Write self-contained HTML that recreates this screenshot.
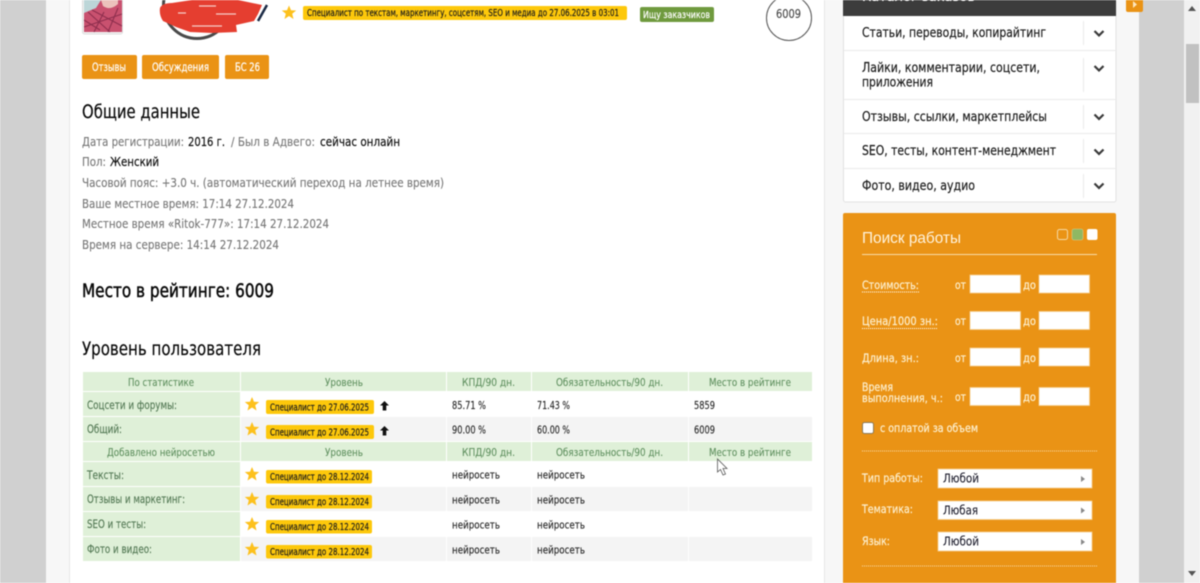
<!DOCTYPE html>
<html lang="ru"><head><meta charset="utf-8"><title>Профиль</title>
<style>
html,body{margin:0;padding:0;width:1200px;height:583px;overflow:hidden;background:#fff}
svg{display:block;filter:blur(.45px)}
text{font-family:"DejaVu Sans","Liberation Sans",sans-serif;font-size:12.5px;fill:#777;stroke:#777;stroke-width:.12px}
.d{fill:#111;stroke:#111;stroke-width:.2px}
.h{font-size:18.5px;fill:#0a0a0a;stroke:#0a0a0a;stroke-width:.2px}
.b{font-size:18.5px;fill:#0a0a0a;stroke:#0a0a0a;stroke-width:.5px}
.s{font-size:13px;fill:#1c1c1c;stroke:#1c1c1c;stroke-width:.2px}
.th{font-size:11px;fill:#5f905f;stroke:#5f905f;stroke-width:.1px}
.f{font-size:11.5px;fill:#557a56;stroke:#557a56;stroke-width:.15px}
.c{font-size:11px;fill:#2a2a2a;stroke:#2a2a2a;stroke-width:.15px}
.bt{font-size:9.500px;fill:#1c1c1c;stroke:#1c1c1c;stroke-width:.2px}
.w{font-size:11.5px;fill:#fff;stroke:#fff;stroke-width:.2px}
.y{font-size:11.5px;fill:#fdf0d0;stroke:#fdf0d0;stroke-width:.2px}
.sel{font-size:12.5px;fill:#1a1a2a;stroke:#1a1a2a;stroke-width:.1px}
</style></head><body>
<svg xmlns="http://www.w3.org/2000/svg" width="1200" height="583" viewBox="0 0 1200 583">
<defs>
<path id="st" d="M0-7 2-2.200 7.200-2 3.200 1.200 4.500 6.500 0 3.500-4.500 6.500-3.200 1.200-7.200-2-2-2.200Z" fill="#fdc11d"/>
<path id="ar" d="M0-5 4.500-.5H1.800V4.500H-1.800V-.5H-4.500Z" fill="#111"/>
<path id="ch" d="M-4.500-2.500 0 2 4.500-2.500" fill="none" stroke="#3a3a3a" stroke-width="2.200"/>
</defs>
<!-- backgrounds -->
<rect width="1200" height="583" fill="#f7f7f7"/>
<rect x="0" y="0" width="46" height="583" fill="#d0d0d0"/>
<rect x="1139" y="0" width="45" height="583" fill="#d0d0d0"/>
<rect x="1184" y="0" width="16" height="583" fill="#f1f1f1"/>
<rect x="1186" y="44" width="13" height="59" fill="#c1c1c1"/>
<path d="M1192 6l4 5h-8Z" fill="#555"/><path d="M1192 576l4-5h-8Z" fill="#555"/>
<rect x="69.500" y="-1" width="755" height="590" fill="#fff" stroke="#e6e6e6"/>
<!-- avatar -->
<rect x="82.500" y="-3" width="40" height="37" rx="2" fill="#f2f2f2" stroke="#ddd"/>
<rect x="84" y="0" width="38" height="32" fill="#bcd6d8"/>
<path d="M84 32V13L96 8 101 0H122V32Z" fill="#c9516f"/>
<path d="M101 0H118V4Q110 11 103 6Z" fill="#ecc2bc"/>
<path d="M84 20 100 30M88 12 110 32M104 12 94 32M118 8 108 32M84 27 122 14M92 10 122 26" stroke="#8f2f4e" stroke-width="1.100" fill="none"/>
<!-- scribbled name -->
<circle cx="197" cy="5" r="33.500" fill="none" stroke="#4a4a4a" stroke-width="3"/>
<path d="M258 21 267 5" stroke="#1b2a45" stroke-width="2.500"/>
<path d="M160 8Q162 3 172 3L192 0H238L262 5 258 14 254 21 236 25 237 32 212 33 190 32 176 27 163 21Q159 15 160 8Z" fill="#e53e30"/>
<path d="M199 6H216M192 26H222M178 13H186M216 14H236" stroke="#f6cfc9" stroke-width="1.200"/>
<!-- top badges -->
<use href="#st" x="289" y="12.500"/>
<rect x="303" y="6" width="324" height="14" rx="2" fill="#fdc80b"/>
<text x="307" y="16" textLength="312" lengthAdjust="spacingAndGlyphs" class="bt">Специалист по текстам, маркетингу, соцсетям, SEO и медиа до 27.06.2025 в 03:01</text>
<rect x="640" y="7" width="74" height="15" rx="2" fill="#6f9a3e"/>
<text x="643" y="18" textLength="67" lengthAdjust="spacingAndGlyphs" style="font-size:10px;fill:#fff;stroke:#fff;stroke-width:.2px">Ищу заказчиков</text>
<circle cx="789" cy="18" r="22.500" fill="#fff" stroke="#555"/>
<text x="776" y="18" textLength="25" lengthAdjust="spacingAndGlyphs" style="fill:#444;stroke:#444">6009</text>
<!-- buttons -->
<rect x="82" y="55" width="55" height="24" rx="2" fill="#ea9315"/>
<rect x="142" y="55" width="77" height="24" rx="2" fill="#ea9315"/>
<rect x="225" y="55" width="44" height="24" rx="2" fill="#ea9315"/>
<text x="92" y="71" textLength="34" lengthAdjust="spacingAndGlyphs" class="w">Отзывы</text>
<text x="152" y="71" textLength="57" lengthAdjust="spacingAndGlyphs" class="w">Обсуждения</text>
<text x="235" y="71" textLength="25" lengthAdjust="spacingAndGlyphs" class="w">БС 26</text>
<!-- general -->
<text x="82" y="118" textLength="118" lengthAdjust="spacingAndGlyphs" class="h">Общие данные</text>
<text x="82" y="146" textLength="102" lengthAdjust="spacingAndGlyphs">Дата регистрации:</text>
<text x="188" y="146" textLength="37" lengthAdjust="spacingAndGlyphs" class="d">2016 г.</text>
<text x="231" y="146" textLength="84" lengthAdjust="spacingAndGlyphs">/ Был в Адвего:</text>
<text x="320" y="146" textLength="80" lengthAdjust="spacingAndGlyphs" class="d">сейчас онлайн</text>
<text x="82" y="166" textLength="24" lengthAdjust="spacingAndGlyphs">Пол:</text>
<text x="110" y="166" textLength="49" lengthAdjust="spacingAndGlyphs" class="d">Женский</text>
<text x="82" y="187" textLength="362" lengthAdjust="spacingAndGlyphs">Часовой пояс: +3.0 ч. (автоматический переход на летнее время)</text>
<text x="82" y="208" textLength="212" lengthAdjust="spacingAndGlyphs">Ваше местное время: 17:14 27.12.2024</text>
<text x="82" y="228" textLength="247" lengthAdjust="spacingAndGlyphs">Местное время «Ritok-777»: 17:14 27.12.2024</text>
<text x="82" y="249" textLength="197" lengthAdjust="spacingAndGlyphs">Время на сервере: 14:14 27.12.2024</text>
<text x="82" y="297" textLength="192" lengthAdjust="spacingAndGlyphs" class="b">Место в рейтинге: 6009</text>
<text x="82" y="355" textLength="179" lengthAdjust="spacingAndGlyphs" class="h">Уровень пользователя</text>
<!-- table -->
<g fill="#dff0d8">
<rect x="83" y="372" width="157" height="19"/><rect x="241" y="372" width="205" height="19"/><rect x="447" y="372" width="84" height="19"/><rect x="532" y="372" width="156" height="19"/><rect x="689" y="372" width="123" height="19"/>
<rect x="83" y="442" width="157" height="19"/><rect x="241" y="442" width="205" height="19"/><rect x="447" y="442" width="84" height="19"/><rect x="532" y="442" width="156" height="19"/><rect x="689" y="442" width="123" height="19"/>
<rect x="83" y="392" width="157" height="24"/><rect x="83" y="417" width="157" height="24"/><rect x="83" y="462" width="157" height="24"/><rect x="83" y="487" width="157" height="24"/><rect x="83" y="512" width="157" height="24"/><rect x="83" y="537" width="157" height="24"/>
</g>
<g fill="#f4f4f4">
<rect x="241" y="417" width="205" height="24"/><rect x="447" y="417" width="84" height="24"/><rect x="532" y="417" width="156" height="24"/><rect x="689" y="417" width="123" height="24"/>
<rect x="241" y="487" width="205" height="24"/><rect x="447" y="487" width="84" height="24"/><rect x="532" y="487" width="156" height="24"/><rect x="689" y="487" width="123" height="24"/>
<rect x="241" y="537" width="205" height="24"/><rect x="447" y="537" width="84" height="24"/><rect x="532" y="537" width="156" height="24"/><rect x="689" y="537" width="123" height="24"/>
</g>
<text x="128" y="386" textLength="66" lengthAdjust="spacingAndGlyphs" class="th">По статистике</text>
<text x="325" y="386" textLength="38" lengthAdjust="spacingAndGlyphs" class="th">Уровень</text>
<text x="462" y="386" textLength="53" lengthAdjust="spacingAndGlyphs" class="th">КПД/90 дн.</text>
<text x="556" y="386" textLength="107" lengthAdjust="spacingAndGlyphs" class="th">Обязательность/90 дн.</text>
<text x="709" y="386" textLength="82" lengthAdjust="spacingAndGlyphs" class="th">Место в рейтинге</text>
<text x="107" y="456" textLength="108" lengthAdjust="spacingAndGlyphs" class="th">Добавлено нейросетью</text>
<text x="325" y="456" textLength="38" lengthAdjust="spacingAndGlyphs" class="th">Уровень</text>
<text x="462" y="456" textLength="53" lengthAdjust="spacingAndGlyphs" class="th">КПД/90 дн.</text>
<text x="556" y="456" textLength="107" lengthAdjust="spacingAndGlyphs" class="th">Обязательность/90 дн.</text>
<text x="709" y="456" textLength="82" lengthAdjust="spacingAndGlyphs" class="th">Место в рейтинге</text>
<text x="87" y="409" textLength="90" lengthAdjust="spacingAndGlyphs" class="f">Соцсети и форумы:</text>
<text x="87" y="433" textLength="35" lengthAdjust="spacingAndGlyphs" class="f">Общий:</text>
<text x="87" y="479" textLength="37" lengthAdjust="spacingAndGlyphs" class="f">Тексты:</text>
<text x="87" y="503" textLength="98" lengthAdjust="spacingAndGlyphs" class="f">Отзывы и маркетинг:</text>
<text x="87" y="528" textLength="59" lengthAdjust="spacingAndGlyphs" class="f">SEO и тесты:</text>
<text x="87" y="553" textLength="65" lengthAdjust="spacingAndGlyphs" class="f">Фото и видео:</text>
<use href="#st" x="252" y="404"/><use href="#st" x="252" y="429"/><use href="#st" x="252" y="474"/><use href="#st" x="252" y="499"/><use href="#st" x="252" y="524"/><use href="#st" x="252" y="549"/>
<g fill="#fdc80b">
<rect x="266" y="400" width="108" height="14" rx="2"/><rect x="266" y="425" width="108" height="14" rx="2"/>
<rect x="266" y="470" width="106" height="13.500" rx="2"/><rect x="266" y="495" width="106" height="13.500" rx="2"/><rect x="266" y="520" width="106" height="13.500" rx="2"/><rect x="266" y="545" width="106" height="13.500" rx="2"/>
</g>
<text x="270" y="410.500" textLength="99" lengthAdjust="spacingAndGlyphs" class="bt">Специалист до 27.06.2025</text>
<text x="270" y="435.500" textLength="99" lengthAdjust="spacingAndGlyphs" class="bt">Специалист до 27.06.2025</text>
<text x="270" y="480" textLength="99" lengthAdjust="spacingAndGlyphs" class="bt">Специалист до 28.12.2024</text>
<text x="270" y="505" textLength="99" lengthAdjust="spacingAndGlyphs" class="bt">Специалист до 28.12.2024</text>
<text x="270" y="530" textLength="99" lengthAdjust="spacingAndGlyphs" class="bt">Специалист до 28.12.2024</text>
<text x="270" y="555" textLength="99" lengthAdjust="spacingAndGlyphs" class="bt">Специалист до 28.12.2024</text>
<use href="#ar" x="384.500" y="406"/><use href="#ar" x="384.500" y="431"/>
<text x="452" y="409" textLength="34" lengthAdjust="spacingAndGlyphs" class="c">85.71 %</text>
<text x="537" y="409" textLength="33" lengthAdjust="spacingAndGlyphs" class="c">71.43 %</text>
<text x="694" y="409" textLength="21" lengthAdjust="spacingAndGlyphs" class="c">5859</text>
<text x="452" y="433.500" textLength="34" lengthAdjust="spacingAndGlyphs" class="c">90.00 %</text>
<text x="537" y="433.500" textLength="33" lengthAdjust="spacingAndGlyphs" class="c">60.00 %</text>
<text x="694" y="433.500" textLength="21" lengthAdjust="spacingAndGlyphs" class="c">6009</text>
<text x="452" y="478.500" textLength="48" lengthAdjust="spacingAndGlyphs" class="c">нейросеть</text><text x="537" y="478.500" textLength="48" lengthAdjust="spacingAndGlyphs" class="c">нейросеть</text>
<text x="452" y="503.500" textLength="48" lengthAdjust="spacingAndGlyphs" class="c">нейросеть</text><text x="537" y="503.500" textLength="48" lengthAdjust="spacingAndGlyphs" class="c">нейросеть</text>
<text x="452" y="528.500" textLength="48" lengthAdjust="spacingAndGlyphs" class="c">нейросеть</text><text x="537" y="528.500" textLength="48" lengthAdjust="spacingAndGlyphs" class="c">нейросеть</text>
<text x="452" y="553.500" textLength="48" lengthAdjust="spacingAndGlyphs" class="c">нейросеть</text><text x="537" y="553.500" textLength="48" lengthAdjust="spacingAndGlyphs" class="c">нейросеть</text>
<path d="M717.500 459V472L720.500 469.500 723 475 725.500 474 723 468.500H727Z" fill="#fff" stroke="#555" stroke-width=".8"/>
<!-- catalog -->
<rect x="1126" y="-2" width="17" height="14" rx="2" fill="#ea9315"/>
<path d="M1133 1l4 3.500-4 3.500Z" fill="#fde7c0"/>
<rect x="843.500" y="0" width="272.500" height="202" rx="2" fill="#fff" stroke="#e2e2e2"/>
<rect x="843" y="0" width="273" height="16" fill="#3c3c3c"/>
<text x="862" y="1" textLength="113" lengthAdjust="spacingAndGlyphs" style="font-size:13px;fill:#fff;stroke:#fff">Каталог заказов</text>
<g fill="#ebebeb">
<rect x="844" y="50" width="272" height="1"/><rect x="844" y="99" width="272" height="1"/><rect x="844" y="133" width="272" height="1"/><rect x="844" y="168" width="272" height="1"/>
<rect x="1083" y="21" width="1" height="24"/><rect x="1083" y="58" width="1" height="34"/><rect x="1083" y="105" width="1" height="24"/><rect x="1083" y="139" width="1" height="24"/><rect x="1083" y="174" width="1" height="24"/>
</g>
<text x="862" y="37" textLength="184" lengthAdjust="spacingAndGlyphs" class="s">Статьи, переводы, копирайтинг</text>
<text x="862" y="72" textLength="178" lengthAdjust="spacingAndGlyphs" class="s">Лайки, комментарии, соцсети,</text>
<text x="862" y="86.500" textLength="71" lengthAdjust="spacingAndGlyphs" class="s">приложения</text>
<text x="862" y="121" textLength="185" lengthAdjust="spacingAndGlyphs" class="s">Отзывы, ссылки, маркетплейсы</text>
<text x="862" y="155" textLength="194" lengthAdjust="spacingAndGlyphs" class="s">SEO, тесты, контент-менеджмент</text>
<text x="862" y="190" textLength="113" lengthAdjust="spacingAndGlyphs" class="s">Фото, видео, аудио</text>
<use href="#ch" x="1099" y="33.500"/><use href="#ch" x="1099" y="68.500"/><use href="#ch" x="1099" y="117"/><use href="#ch" x="1099" y="152"/><use href="#ch" x="1099" y="186"/>
<!-- search panel -->
<path d="M843 590V215a2 2 0 0 1 2-2H1114a2 2 0 0 1 2 2V590Z" fill="#ea9315"/>
<text x="862" y="243" textLength="99" lengthAdjust="spacingAndGlyphs" style="font-family:'Liberation Sans',sans-serif;font-size:16px;fill:#fff3dc;stroke:none">Поиск работы</text>
<rect x="1057.500" y="229.500" width="10" height="10" rx="2" fill="none" stroke="#f5d9a5"/>
<rect x="1072" y="229" width="11" height="11" rx="2" fill="#8fb863" stroke="#d8c98a" stroke-width=".6"/>
<rect x="1087" y="229" width="10.500" height="11" rx="2" fill="#fff"/>
<rect x="862" y="254" width="235" height="1" fill="#f8dca8"/>
<g fill="#fff" stroke="#f5cf90" stroke-width=".8">
<rect x="970" y="275" width="50.500" height="18"/><rect x="1039" y="275" width="50.500" height="18"/>
<rect x="970" y="311.500" width="50.500" height="18"/><rect x="1039" y="311.500" width="50.500" height="18"/>
<rect x="970" y="348" width="50.500" height="18"/><rect x="1039" y="348" width="50.500" height="18"/>
<rect x="970" y="387.500" width="50.500" height="18"/><rect x="1039" y="387.500" width="50.500" height="18"/>
</g>
<text x="862" y="289" textLength="57" lengthAdjust="spacingAndGlyphs" class="y">Стоимость:</text>
<path d="M862 292H919M862 328.500H938" stroke="#fff" stroke-width="1" stroke-dasharray="1 1"/>
<text x="862" y="325" textLength="76" lengthAdjust="spacingAndGlyphs" class="y">Цена/1000 зн.:</text>
<text x="862" y="362" textLength="57" lengthAdjust="spacingAndGlyphs" class="y">Длина, зн.:</text>
<text x="862" y="391" textLength="31" lengthAdjust="spacingAndGlyphs" class="y">Время</text>
<text x="862" y="402" textLength="81" lengthAdjust="spacingAndGlyphs" class="y">выполнения, ч.:</text>
<text x="955" y="289" textLength="11" lengthAdjust="spacingAndGlyphs" class="y">от</text><text x="1023" y="289" textLength="13" lengthAdjust="spacingAndGlyphs" class="y">до</text>
<text x="955" y="325" textLength="11" lengthAdjust="spacingAndGlyphs" class="y">от</text><text x="1023" y="325" textLength="13" lengthAdjust="spacingAndGlyphs" class="y">до</text>
<text x="955" y="362" textLength="11" lengthAdjust="spacingAndGlyphs" class="y">от</text><text x="1023" y="362" textLength="13" lengthAdjust="spacingAndGlyphs" class="y">до</text>
<text x="955" y="401" textLength="11" lengthAdjust="spacingAndGlyphs" class="y">от</text><text x="1023" y="401" textLength="13" lengthAdjust="spacingAndGlyphs" class="y">до</text>
<rect x="862.500" y="422.500" width="11" height="11" rx="2" fill="#fff" stroke="#8a7a5a"/>
<text x="880" y="432" textLength="98" lengthAdjust="spacingAndGlyphs" class="y">с оплатой за объем</text>
<path d="M862 451H1097M862 566H1097" stroke="#f8dca8" stroke-width="1" stroke-dasharray="1 1"/>
<text x="862" y="482" textLength="61" lengthAdjust="spacingAndGlyphs" class="y">Тип работы:</text>
<text x="862" y="513" textLength="51" lengthAdjust="spacingAndGlyphs" class="y">Тематика:</text>
<text x="862" y="545" textLength="28" lengthAdjust="spacingAndGlyphs" class="y">Язык:</text>
<g fill="#fff" stroke="#f5cf90" stroke-width=".8">
<rect x="938" y="469" width="154" height="19"/><rect x="938" y="501" width="154" height="18.500"/><rect x="938" y="532" width="154" height="19"/>
</g>
<text x="943" y="482.500" textLength="36" lengthAdjust="spacingAndGlyphs" class="sel">Любой</text>
<text x="943" y="514.500" textLength="35" lengthAdjust="spacingAndGlyphs" class="sel">Любая</text>
<text x="943" y="545.500" textLength="36" lengthAdjust="spacingAndGlyphs" class="sel">Любой</text>
<path d="M1081 476l4 3-4 3ZM1081 507.500l4 3-4 3ZM1081 539l4 3-4 3Z" fill="#888"/>
</svg>
</body></html>
